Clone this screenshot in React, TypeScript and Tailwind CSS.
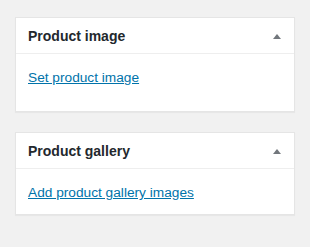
const Panel = ({ title, link, bodyH }: { title: string; link: string; bodyH: string }) => {
  return (
    <div className="w-[280px] border border-[#e5e5e5] bg-white shadow-[0_1px_1px_rgba(0,0,0,0.04)]">
      <div className="flex h-[36px] items-center justify-between border-b border-[#eeeeee] pl-3 pr-[13px] pt-[1px]">
        <h2 className="text-[14px] font-semibold leading-[20px] text-[#23282d]">{title}</h2>
        <svg width="8" height="5" viewBox="0 0 8 5">
          <polygon points="4,0 8,5 0,5" fill="#72777c" />
        </svg>
      </div>
      <div className={`${bodyH} px-3 pt-[11px]`}>
        <a href="#" className="text-[13.7px] leading-[18px] text-[#0073aa] underline">
          {link}
        </a>
      </div>
    </div>
  );
};

export default function App() {
  return (
    <div
      className="min-h-[247px] w-[310px] bg-[#f1f1f1] px-[15px] pt-[17px]"
      style={{ fontFamily: '"Liberation Sans", Arial, sans-serif' }}
    >
      <div className="flex flex-col gap-5">
        <Panel title="Product image" link="Set product image" bodyH="h-[57px]" />
        <Panel title="Product gallery" link="Add product gallery images" bodyH="h-[45px]" />
      </div>
    </div>
  );
}
